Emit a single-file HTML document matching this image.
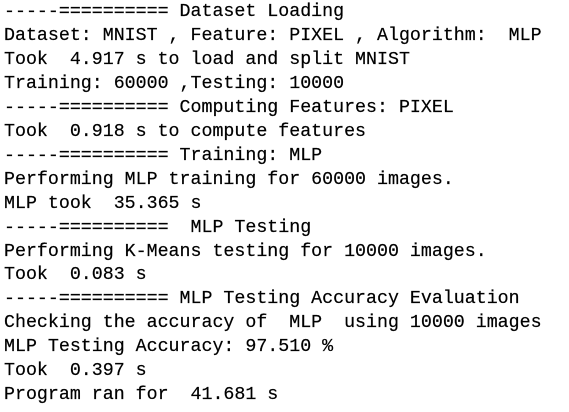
<html><head><style>
body{margin:0;background:#fff;width:569px;height:412px;overflow:hidden}
pre{margin:0;padding:1px 0 0 4px;font-family:"Liberation Mono",monospace;font-size:18.3px;line-height:23.95px;color:#000;-webkit-text-stroke:0.2px #000}
</style></head><body><pre>-----========== Dataset Loading
Dataset: MNIST , Feature: PIXEL , Algorithm:  MLP
Took  4.917 s to load and split MNIST
Training: 60000 ,Testing: 10000
-----========== Computing Features: PIXEL
Took  0.918 s to compute features
-----========== Training: MLP
Performing MLP training for 60000 images.
MLP took  35.365 s
-----==========  MLP Testing
Performing K-Means testing for 10000 images.
Took  0.083 s
-----========== MLP Testing Accuracy Evaluation
Checking the accuracy of  MLP  using 10000 images
MLP Testing Accuracy: 97.510 %
Took  0.397 s
Program ran for  41.681 s</pre></body></html>
